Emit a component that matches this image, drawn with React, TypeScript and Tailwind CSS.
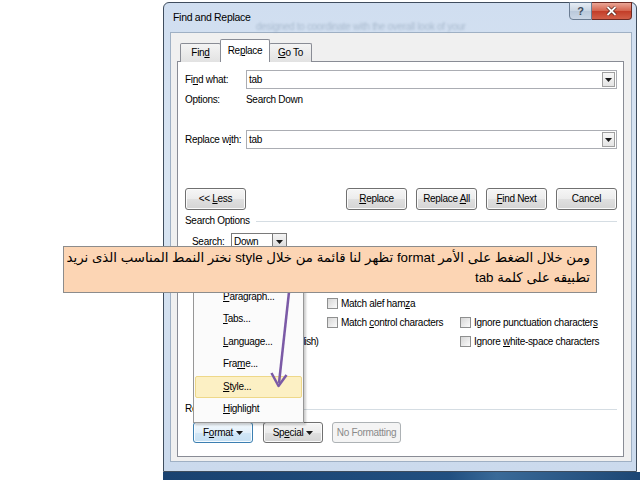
import React from "react";

const U = ({ children }: { children: React.ReactNode }) => (
  <span className="underline underline-offset-[1px]">{children}</span>
);

function Tri() {
  return (
    <svg width="7" height="4" viewBox="0 0 7 4">
      <path d="M0 0H7L3.5 4Z" fill="#1a1a1a" />
    </svg>
  );
}

function Combo({ value }: { value: string }) {
  return (
    <div className="flex-1 h-[19px] border border-[#abadb3] bg-white flex items-stretch">
      <div className="flex-1 pl-[2px] flex items-center">{value}</div>
      <div className="w-[13px] my-[1px] mr-[1px] border border-[#a0a0a0] bg-[linear-gradient(#f8f8f8,#e4e4e4)] flex items-center justify-center">
        <Tri />
      </div>
    </div>
  );
}

function Btn({ children, className }: { children: React.ReactNode; className: string }) {
  return (
    <div
      className={
        "rounded-[3px] border border-[#707070] bg-[linear-gradient(#f6f6f6,#ececec_50%,#e0e0e0_50%,#d4d4d4)] shadow-[inset_0_0_0_1px_#fbfbfb] flex items-center justify-center whitespace-pre " +
        className
      }
    >
      {children}
    </div>
  );
}

function Check({ children }: { children: React.ReactNode }) {
  return (
    <div className="h-[19px] flex items-center gap-[3px] whitespace-nowrap">
      <div className="w-[11px] h-[11px] shrink-0 border border-[#8e8f8f] bg-[linear-gradient(135deg,#d6d6d6,#fbfbfb)]" />
      <span>{children}</span>
    </div>
  );
}

function MenuItem({ children, active }: { children: React.ReactNode; active?: boolean }) {
  return (
    <div
      className={
        active
          ? "h-[22.5px] flex items-center pl-[27px] bg-[#fcf0c4] border border-[#eed889] rounded-[2px]"
          : "h-[22.5px] flex items-center pl-[28px]"
      }
    >
      {children}
    </div>
  );
}

export default function App() {
  return (
    <div className="w-[640px] h-[480px] bg-white relative overflow-hidden flex font-['Liberation_Sans',Arial,sans-serif] text-[10px] tracking-[-0.3px] text-black leading-none">
      <div className="w-[163px] shrink-0" />
      <div className="w-[477px] flex flex-col pt-[2px]">
        {/* window frame */}
        <div className="w-[474px] h-[470px] rounded-t-[6px] border border-[#3f4d5e] bg-[linear-gradient(#d0def0,#d9e5f2_40%,#cbdaed)] flex flex-col pl-[6px] pr-[4px] pb-[9px]">
          {/* title bar */}
          <div className="h-[29px] flex items-start justify-between relative">
            <div className="h-full flex items-center pl-[3px] text-[10.5px]">Find and Replace</div>
            <div className="absolute left-[86px] top-[19px] text-[10px] text-[#8ea2b8] blur-[1px] opacity-60 whitespace-nowrap">
              designed to coordinate with the overall look of your
            </div>
            <div className="flex -mt-[1px]">
              <div className="w-[23px] h-[18px] rounded-bl-[4px] border border-[#6b7d93] bg-[linear-gradient(#e6edf5,#c9d5e3_50%,#b9c8da_50%,#cbd7e6)] flex items-center justify-center text-[11px] font-bold text-[#3e4c5c]">
                ?
              </div>
              <div className="w-[40px] h-[18px] rounded-br-[4px] border border-l-0 border-[#6d2a23] bg-[linear-gradient(#eaa595,#d4624c_50%,#c23c27_50%,#d25f48)] flex items-center justify-center">
                <svg width="11" height="10" viewBox="0 0 11 10">
                  <path d="M1.5 1L9.5 9M9.5 1L1.5 9" stroke="#4a1a14" strokeWidth="3.2" />
                  <path d="M1.5 1L9.5 9M9.5 1L1.5 9" stroke="#ffffff" strokeWidth="1.8" />
                </svg>
              </div>
            </div>
          </div>
          {/* client area */}
          <div className="flex-1 border border-[#9fb0c4] bg-[#f0f0f0] flex flex-col pt-[7px] pl-[6px] pr-[7px] pb-[4px]">
            {/* tabs */}
            <div className="h-[22px] flex items-end pl-[3px] -mb-px relative z-10">
              <div className="w-[41px] h-[19px] border border-b-0 border-[#898c95] rounded-t-[2px] bg-[linear-gradient(#f4f4f4,#e2e2e2)] flex items-center justify-center">
                <span>
                  Fin<U>d</U>
                </span>
              </div>
              <div className="w-[50px] h-[23px] border border-b-0 border-[#898c95] rounded-t-[2px] bg-white flex items-center justify-center -mx-px">
                <span>
                  Re<U>p</U>lace
                </span>
              </div>
              <div className="w-[43px] h-[19px] border border-b-0 border-[#898c95] rounded-t-[2px] bg-[linear-gradient(#f4f4f4,#e2e2e2)] flex items-center justify-center">
                <span>
                  <U>G</U>o To
                </span>
              </div>
            </div>
            {/* panel */}
            <div className="flex-1 border border-[#898c95] bg-white flex flex-col pt-[8px] pl-[7px] pr-[6px]">
              <div className="flex items-center">
                <div className="w-[61px]">
                  Fi<U>n</U>d what:
                </div>
                <Combo value="tab" />
              </div>
              <div className="mt-[4px] h-[14px] flex items-center">
                <div className="w-[61px]">Options:</div>
                <div>Search Down</div>
              </div>
              <div className="mt-[23px] flex items-center">
                <div className="w-[61px]">
                  Replace w<U>i</U>th:
                </div>
                <Combo value="tab" />
              </div>
              <div className="mt-[39px] h-[22px] flex justify-between">
                <Btn className="w-[61px] h-[22px]">
                  <span>
                    {"<< "}
                    <U>L</U>ess
                  </span>
                </Btn>
                <div className="flex gap-[9px]">
                  <Btn className="w-[61px] h-[22px]">
                    <span>
                      <U>R</U>eplace
                    </span>
                  </Btn>
                  <Btn className="w-[61px] h-[22px]">
                    <span>
                      {"Replace "}
                      <U>A</U>ll
                    </span>
                  </Btn>
                  <Btn className="w-[61px] h-[22px]">
                    <span>
                      <U>F</U>ind Next
                    </span>
                  </Btn>
                  <Btn className="w-[61px] h-[22px]">
                    <span>Cancel</span>
                  </Btn>
                </div>
              </div>
              <div className="mt-[4px] h-[14px] flex items-center">
                <span>Search Options</span>
                <div className="flex-1 h-px bg-[#d5dde3] ml-[6px]" />
              </div>
              <div className="mt-[5px] h-[17px] flex items-center pl-[7px]">
                <div className="w-[39px]">
                  Sea<U>r</U>ch:
                </div>
                <div className="w-[56px] h-[17px] border border-[#7a7a7a] bg-white flex items-stretch">
                  <div className="flex-1 pl-[2px] flex items-center">Down</div>
                  <div className="w-[14px] border-l border-[#7a7a7a] bg-[linear-gradient(#f4f4f4,#dadada)] flex items-center justify-center">
                    <Tri />
                  </div>
                </div>
              </div>
              <div className="mt-[6px] flex">
                <div className="w-[142px] pl-[10px] flex flex-col">
                  <Check>
                    Matc<U>h</U> case
                  </Check>
                  <Check>
                    Find wh<U>o</U>le words only
                  </Check>
                  <Check>
                    Use wildcar<U>d</U>s
                  </Check>
                  <Check>
                    Sounds li<U>k</U>e (English)
                  </Check>
                  <Check>
                    <span className="tracking-[-0.6px]">
                      Find all <U>w</U>ord forms (English)
                    </span>
                  </Check>
                </div>
                <div className="w-[133px] flex flex-col">
                  <Check>
                    Match <U>k</U>ashida
                  </Check>
                  <Check>
                    Match dia<U>c</U>ritics
                  </Check>
                  <Check>
                    Match alef ham<U>z</U>a
                  </Check>
                  <Check>
                    Match <U>c</U>ontrol characters
                  </Check>
                </div>
                <div className="flex-1 flex flex-col">
                  <Check>
                    Match prefi<U>x</U>
                  </Check>
                  <Check>
                    Match suffi<U>x</U>
                  </Check>
                  <div className="h-[19px]" />
                  <Check>
                    Ignore punctuation character<U>s</U>
                  </Check>
                  <Check>
                    Ignore <U>w</U>hite-space characters
                  </Check>
                </div>
              </div>
              <div className="mt-[51px] h-[14px] flex items-center">
                <span>Replace</span>
                <div className="flex-1 h-px bg-[#d5dde3] ml-[6px]" />
              </div>
              <div className="mt-[6px] flex pl-[8px] gap-[10px]">
                <div className="w-[60px] h-[21px] rounded-[3px] border border-[#3c7fb1] bg-[linear-gradient(#f3f9fd,#e3f0fa_50%,#d2e7f6_50%,#c6e0f3)] shadow-[inset_0_0_0_1px_#f8fcff] flex items-center justify-center gap-[3px]">
                  <span>
                    F<U>o</U>rmat
                  </span>
                  <Tri />
                </div>
                <Btn className="w-[60px] h-[21px] gap-[3px]">
                  <span>
                    Sp<U>e</U>cial
                  </span>
                  <Tri />
                </Btn>
                <div className="w-[69px] h-[21px] -ml-[1px] rounded-[3px] border border-[#adb2b5] bg-[#f4f4f4] text-[#8a8a8a] flex items-center justify-center">
                  No Formatting
                </div>
              </div>
            </div>
          </div>
        </div>
        <div className="flex-1 bg-[linear-gradient(90deg,#1a4270,#214f80_60%,#3a6a98_70%,#1d4674)]" />
      </div>

      {/* Format dropdown menu */}
      <div className="absolute left-[193px] top-[261px] w-[111px] border border-[#979797] bg-[#fbfbfb] py-[1px] px-px shadow-[2px_2px_2px_rgba(0,0,0,0.2)]">
        <MenuItem>
          <span>
            <U>F</U>ont...
          </span>
        </MenuItem>
        <MenuItem>
          <span>
            <U>P</U>aragraph...
          </span>
        </MenuItem>
        <MenuItem>
          <span>
            <U>T</U>abs...
          </span>
        </MenuItem>
        <MenuItem>
          <span>
            <U>L</U>anguage...
          </span>
        </MenuItem>
        <MenuItem>
          <span>
            Fra<U>m</U>e...
          </span>
        </MenuItem>
        <MenuItem active>
          <span>
            <U>S</U>tyle...
          </span>
        </MenuItem>
        <MenuItem>
          <span>
            <U>H</U>ighlight
          </span>
        </MenuItem>
      </div>

      {/* purple arrow */}
      <svg className="absolute left-0 top-0 pointer-events-none" width="640" height="480">
        <path d="M289 292 L279 383" stroke="#7b5aa6" strokeWidth="2.5" fill="none" />
        <path d="M271.5 373 L278.5 386 L286.5 375" stroke="#7b5aa6" strokeWidth="2.5" fill="none" strokeLinejoin="round" />
      </svg>

      {/* callout */}
      <div
        dir="rtl"
        className="absolute left-[63px] top-[246px] w-[534px] h-[47px] border border-[#8c8c8c] bg-[#fcd5b4] pr-[6px] pt-[1px] text-right text-[13.3px] leading-[20px] tracking-normal font-['Liberation_Sans','DejaVu_Sans',sans-serif] text-black whitespace-nowrap"
      >
        ومن خلال الضغط على الأمر format تظهر لنا قائمة من خلال style نختر النمط المناسب الذى نريد
        <br />
        تطبيقه على كلمة tab
      </div>
    </div>
  );
}
